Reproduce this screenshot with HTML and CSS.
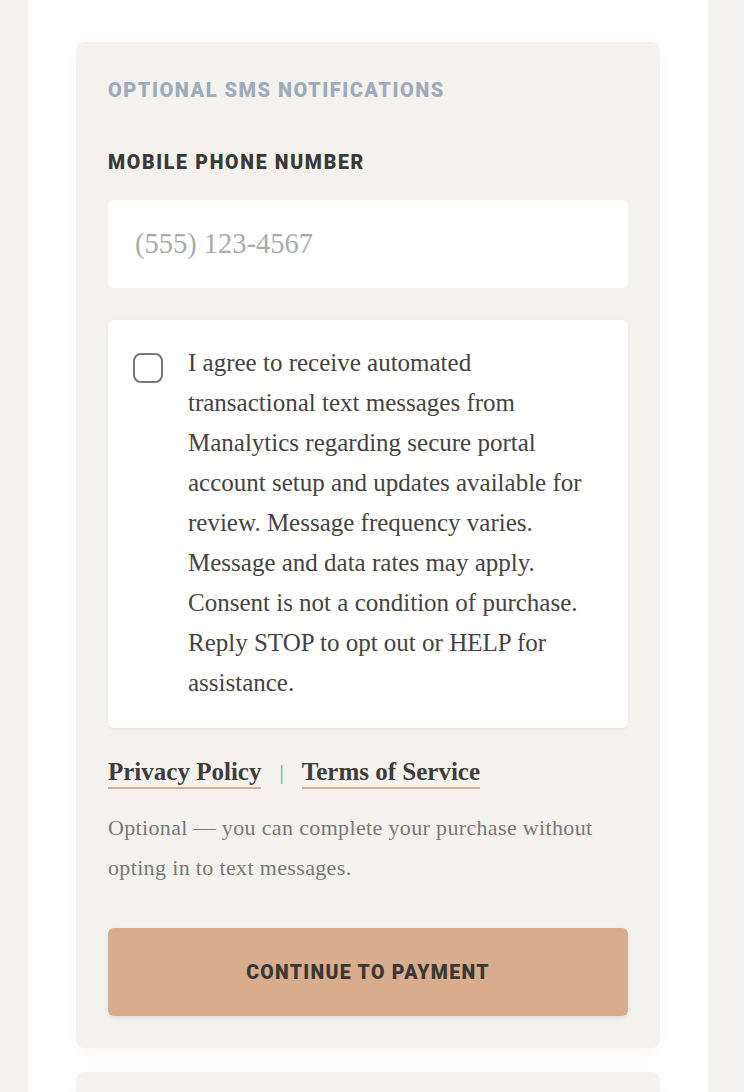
FILE: index.html
```html
<!DOCTYPE html>
<html lang="en">
<head>
<meta charset="utf-8">
<title>SMS Notifications</title>
<link rel="stylesheet" href="styles.css">
</head>
<body>
<div class="page">
  <main class="column">
    <section class="card">
      <h2 class="card-title">Optional SMS Notifications</h2>
      <label class="field-label" for="phone">Mobile Phone Number</label>
      <input class="phone-input" id="phone" type="tel" placeholder="(555) 123-4567">
      <div class="consent">
        <span class="checkbox"></span>
        <p class="consent-text">I agree to receive automated transactional text messages from Manalytics regarding secure portal account setup and updates available for review. Message frequency varies. Message and data rates may apply. Consent is not a condition of purchase. Reply STOP to opt out or HELP for assistance.</p>
      </div>
      <div class="links">
        <a class="link" href="#">Privacy Policy</a>
        <span class="sep">|</span>
        <a class="link" href="#">Terms of Service</a>
      </div>
      <p class="note">Optional — you can complete your purchase without opting in to text messages.</p>
      <button class="cta" type="button">Continue to Payment</button>
    </section>
    <section class="card card-next"></section>
  </main>
</div>
</body>
</html>
```
FILE: styles.css
```css
* { box-sizing: border-box; }
html, body { margin: 0; padding: 0; }
body {
  background: #f4f3ef;
  font-family: "Liberation Serif", "Times New Roman", serif;
  overflow: hidden;
  height: 1092px;
}
.page {
  padding: 0 36px 0 28px;
}
.column {
  background: #ffffff;
  padding: 42px 48px 0 48px;
  min-height: 1092px;
  display: flex;
  flex-direction: column;
  gap: 24px;
}
.card {
  background: #f4f2ee;
  border-radius: 8px;
  padding: 32px;
  display: flex;
  flex-direction: column;
  box-shadow: 0 4px 16px rgba(0,0,0,0.03);
}
.card-next { min-height: 60px; }
.card-title {
  margin: 1px 0 0;
  font-family: Roboto, "Liberation Sans", sans-serif;
  font-weight: 900;
  font-size: 20px;
  line-height: 30px;
  letter-spacing: 1.5px;
  text-transform: uppercase;
  color: #9dabba;
}
.field-label {
  margin-top: 46px;
  font-family: Roboto, "Liberation Sans", sans-serif;
  font-weight: 900;
  font-size: 19.5px;
  line-height: 24px;
  letter-spacing: 1.7px;
  text-transform: uppercase;
  color: #3b3937;
}
.phone-input {
  margin-top: 25px;
  height: 88px;
  border: none;
  border-radius: 6px;
  background: #fff;
  padding: 0 27px;
  font-family: "Liberation Serif", serif;
  font-size: 28.5px;
  color: #444;
  outline: none;
}
.phone-input::placeholder { color: #ababab; }
.consent {
  margin-top: 32px;
  background: #fff;
  border-radius: 6px;
  box-shadow: 0 1px 3px rgba(0,0,0,0.08);
  padding: 23px 24px 25px 25px;
  display: flex;
  gap: 25px;
  align-items: flex-start;
}
.checkbox {
  flex: none;
  width: 30px;
  height: 30px;
  margin-top: 10px;
  border: 2px solid #777;
  border-radius: 8px;
  background: #fff;
}
.consent-text {
  margin: 0;
  font-size: 25px;
  line-height: 40px;
  color: #454341;
  max-width: 402px;
}
.links {
  margin-top: 29px;
  display: flex;
  align-items: flex-start;
  gap: 18px;
  line-height: 30px;
}
.link {
  font-size: 25px;
  font-weight: 700;
  color: #3f3d3b;
  text-decoration: none;
  border-bottom: 2px solid #d8ad8c;
  line-height: 30px;
}
.sep {
  font-size: 22px;
  color: #999;
  line-height: 30px;
}
.note {
  margin: 19px 0 0;
  font-size: 22px;
  letter-spacing: 0.35px;
  line-height: 40px;
  color: #7a7876;
  max-width: 500px;
}
.cta {
  margin-top: 40px;
  height: 88px;
  border: none;
  border-radius: 6px;
  background: #d7ad8e;
  box-shadow: 0 2px 4px rgba(0,0,0,0.08);
  font-family: Roboto, "Liberation Sans", sans-serif;
  font-weight: 900;
  font-size: 19.5px;
  letter-spacing: 1.3px;
  text-transform: uppercase;
  color: #3a3835;
  cursor: pointer;
}
```
